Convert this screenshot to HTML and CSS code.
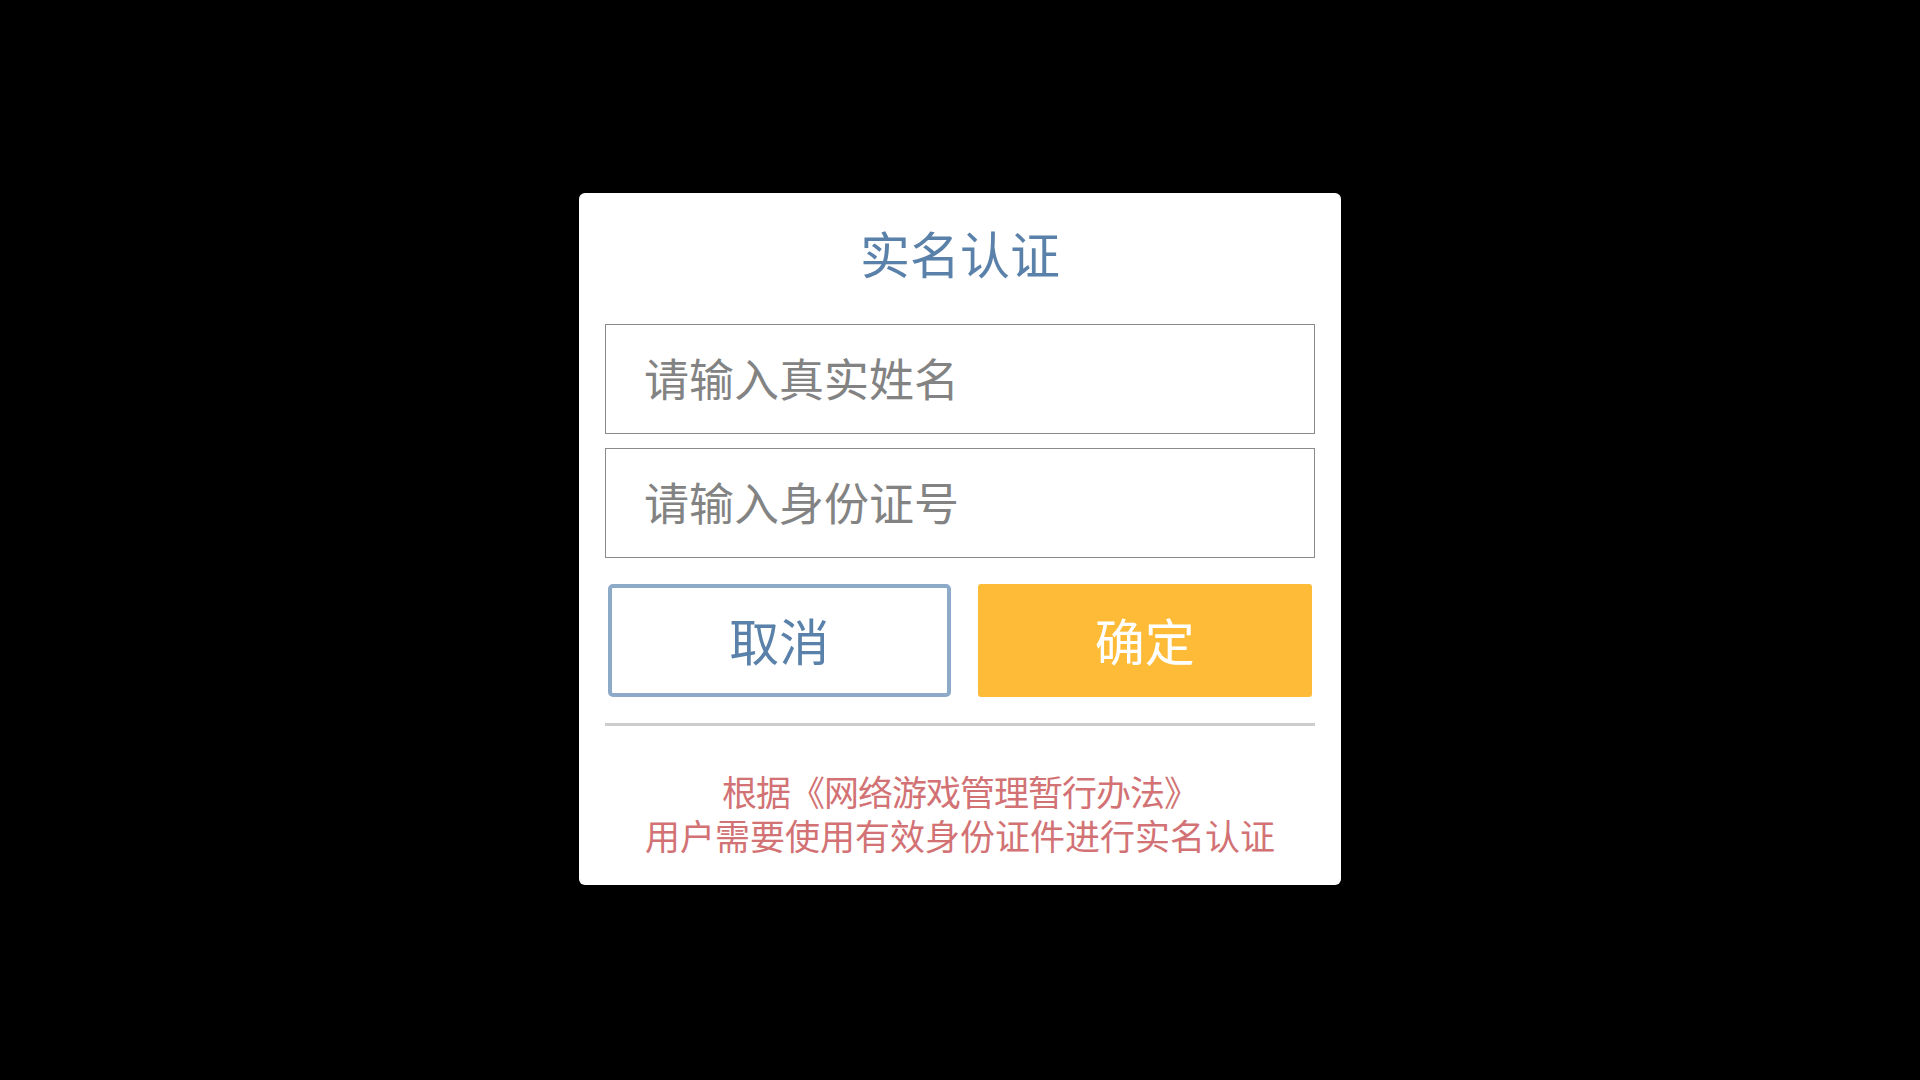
FILE: index.html
```html
<!DOCTYPE html>
<html lang="zh-CN">
<head>
<meta charset="utf-8">
<title>实名认证</title>
<link rel="stylesheet" href="styles.css">
</head>
<body>
<div class="overlay">
  <div class="dialog">
    <h1 class="title">实名认证</h1>
    <div class="fields">
      <input class="field" type="text" placeholder="请输入真实姓名">
      <input class="field" type="text" placeholder="请输入身份证号">
    </div>
    <div class="actions">
      <button class="btn btn-cancel">取消</button>
      <button class="btn btn-ok">确定</button>
    </div>
    <div class="divider"></div>
    <p class="notice"><span class="notice-law">根据《网络游戏管理暂行办法》</span><br>用户需要使用有效身份证件进行实名认证</p>
  </div>
</div>
</body>
</html>
```
FILE: styles.css
```css
html, body {
  margin: 0;
  padding: 0;
  height: 100%;
  background: #000;
}
body {
  font-family: "Noto Sans CJK SC", "Noto Sans", sans-serif;
}
.overlay {
  height: 100vh;
  box-sizing: border-box;
  padding-bottom: 2px;
  display: flex;
  align-items: center;
  justify-content: center;
}
.dialog {
  width: 762px;
  height: 692px;
  box-sizing: border-box;
  background: #fff;
  border-radius: 6px;
  padding: 29px 26px 0;
  display: flex;
  flex-direction: column;
}
.title {
  margin: 0;
  font-size: 50px;
  font-weight: normal;
  line-height: 60px;
  color: #5a81a9;
  text-align: center;
}
.fields {
  margin-top: 42px;
  display: flex;
  flex-direction: column;
  gap: 14px;
}
.field {
  display: block;
  width: 100%;
  height: 110px;
  box-sizing: border-box;
  border: 1px solid #8a8a8a;
  border-radius: 0;
  padding: 0 0 4px 38px;
  margin: 0;
  font-family: inherit;
  font-size: 45px;
  color: #555;
  background: #fff;
  outline: none;
}
.field::placeholder {
  color: #838383;
}
.actions {
  margin-top: 26px;
  padding: 0 3px;
  display: flex;
  gap: 27px;
}
.btn {
  flex: 1;
  height: 113px;
  box-sizing: border-box;
  margin: 0;
  padding: 0 0 4px;
  font-family: inherit;
  font-size: 50px;
  line-height: 1;
  cursor: pointer;
}
.btn-cancel {
  background: #fff;
  color: #5a81a9;
  border: 4px solid #8eaac9;
  border-radius: 5px;
}
.btn-ok {
  background: #fdbb37;
  color: #fff;
  border: none;
  border-radius: 3px;
}
.divider {
  margin-top: 26px;
  height: 3px;
  background: #cccccc;
}
.notice {
  margin: 43px 0 0;
  font-size: 35px;
  line-height: 44px;
  color: #d27274;
  text-align: center;
}
.notice-law {
  letter-spacing: -1px;
}
```
